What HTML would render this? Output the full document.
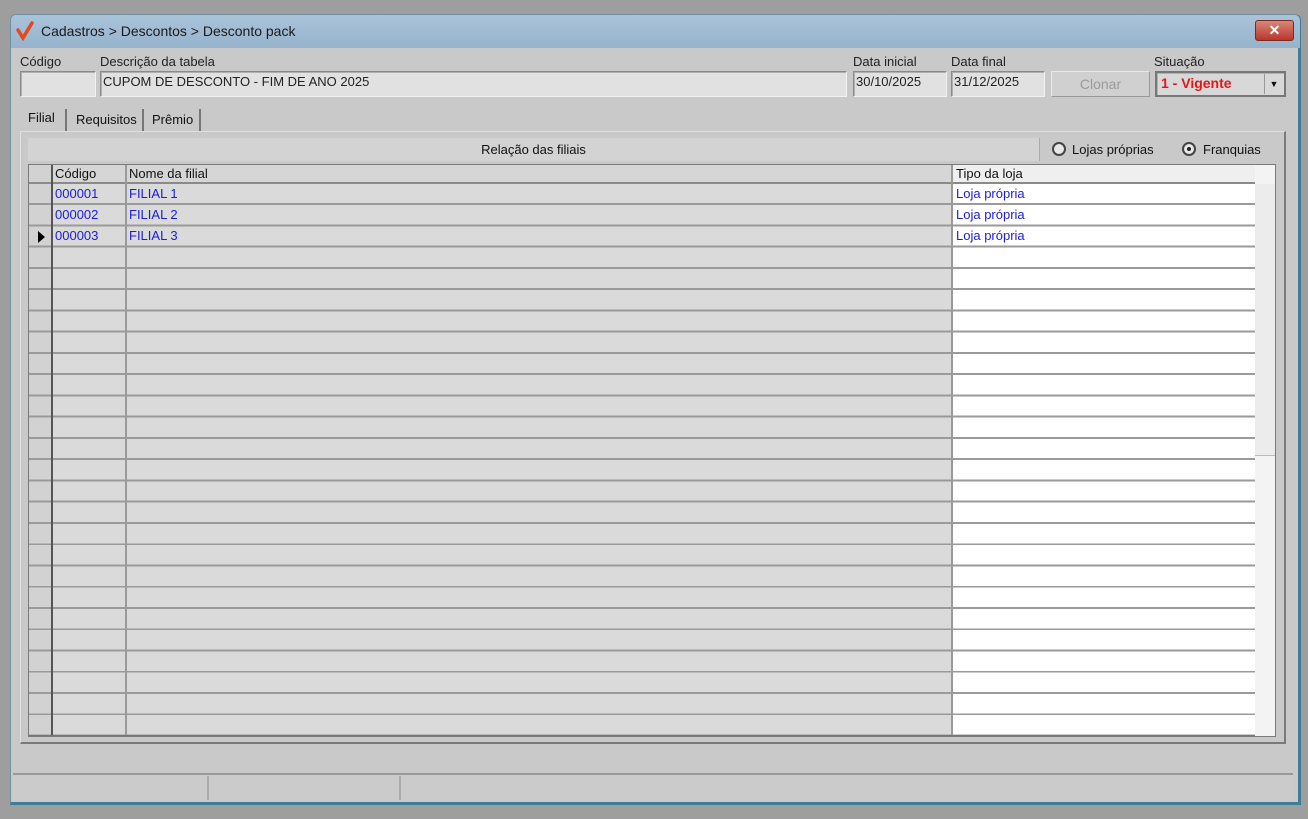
<!DOCTYPE html>
<html><head><meta charset="utf-8"><style>
*{margin:0;padding:0;box-sizing:border-box}
body{width:1308px;height:819px;background:#9e9e9e;font-family:"Liberation Sans",sans-serif;font-size:12px;color:#111;position:relative;overflow:hidden}
.a{position:absolute}
.win{left:10px;top:14px;width:1291px;height:791px;background:#c9c9c9;border:1px solid #6f8fa3;border-bottom:3px solid #3d7d95;border-right:3px solid #3d7d95;border-radius:6px 6px 0 0}
.title{left:11px;top:15px;width:1289px;height:33px;background:linear-gradient(#a9c3da,#97b3cc);border-radius:5px 5px 0 0}
.fld{background:#e1e1e1;border:1px solid #8a8a8a;border-right-color:#f2f2f2;border-bottom-color:#f2f2f2;box-shadow:inset 1px 1px 0 #b0b0b0;font-size:13px;padding:2px 2px;color:#222}
.lbl{font-size:13px;color:#222}
.grid{left:28px;top:164px;width:1248px;height:573px;border:1px solid #7a7a7a;background:#fff;overflow:hidden}
.rows{left:0;top:19px;width:1226px;height:553px;background:repeating-linear-gradient(to bottom,transparent 0,transparent 19.25px,#9a9a9a 19.25px,#9a9a9a 21.25px)}
.blue{color:#1c1cd8;font-size:13px}
</style></head><body>
<div class="a win"></div>
<div class="a title"></div>
<svg class="a" style="left:16px;top:21px" width="20" height="20" viewBox="0 0 20 20"><path d="M2 9 L7 17 L16 2" stroke="#e24a1c" stroke-width="3.5" fill="none" stroke-linecap="round"/></svg>
<div class="a" style="left:41px;top:23px;font-size:14px;color:#1a1a1a">Cadastros &gt; Descontos &gt; Desconto pack</div>
<div class="a" style="left:1255px;top:20px;width:39px;height:21px;background:linear-gradient(#d9877a,#b9372a);border:1px solid #7a2a20;border-radius:3px;color:#fff;font-weight:bold;text-align:center;font-size:14px;line-height:19px">✕</div>

<div class="a lbl" style="left:20px;top:54px">Código</div>
<div class="a fld" style="left:20px;top:71px;width:76px;height:26px"></div>
<div class="a lbl" style="left:100px;top:54px">Descrição da tabela</div>
<div class="a fld" style="left:100px;top:71px;width:747px;height:26px">CUPOM DE DESCONTO - FIM DE ANO 2025</div>
<div class="a lbl" style="left:853px;top:54px">Data inicial</div>
<div class="a fld" style="left:853px;top:71px;width:94px;height:26px">30/10/2025</div>
<div class="a lbl" style="left:951px;top:54px">Data final</div>
<div class="a fld" style="left:951px;top:71px;width:94px;height:26px">31/12/2025</div>
<div class="a" style="left:1051px;top:71px;width:99px;height:26px;background:#d0d0d0;border:1px solid #e8e8e8;border-right-color:#999;border-bottom-color:#999;color:#9a9a9a;font-size:14px;text-align:center;line-height:24px">Clonar</div>
<div class="a lbl" style="left:1154px;top:54px">Situação</div>
<div class="a fld" style="left:1155px;top:71px;width:131px;height:26px;border:2px solid #777;background:#d8d8d8;color:#e01818;font-weight:bold;font-size:14px;padding:2px 4px">1 - Vigente</div>
<div class="a" style="left:1264px;top:74px;width:19px;height:20px;background:#d8d8d8;border-left:1px solid #999;text-align:center;font-size:9px;line-height:20px">▼</div>

<div class="a" style="left:28px;top:110px;font-size:13px">Filial</div>
<div class="a" style="left:65px;top:109px;width:2px;height:22px;background:#777"></div>
<div class="a" style="left:76px;top:112px;font-size:13px">Requisitos</div>
<div class="a" style="left:142px;top:109px;width:2px;height:22px;background:#777"></div>
<div class="a" style="left:152px;top:112px;font-size:13px">Prêmio</div>
<div class="a" style="left:199px;top:109px;width:2px;height:22px;background:#777"></div>

<div class="a" style="left:20px;top:131px;width:1266px;height:613px;border:1px solid #e0e0e0;border-right:2px solid #7a7a7a;border-bottom:2px solid #7a7a7a"></div>
<div class="a" style="left:28px;top:138px;width:1012px;height:23px;background:#d3d3d3;border-right:1px solid #aaa;text-align:center;line-height:23px;font-size:13px">Relação das filiais</div>
<div class="a" style="left:1052px;top:142px;width:14px;height:14px;border:2px solid #444;border-radius:50%;background:#e8e8e8"></div>
<div class="a" style="left:1072px;top:142px;font-size:13px">Lojas próprias</div>
<div class="a" style="left:1182px;top:142px;width:14px;height:14px;border:2px solid #444;border-radius:50%;background:#e8e8e8"></div>
<div class="a" style="left:1187px;top:147px;width:4px;height:4px;border-radius:50%;background:#222"></div>
<div class="a" style="left:1203px;top:142px;font-size:13px">Franquias</div>

<div class="a grid">
 <div class="a" style="left:0;top:0;width:924px;height:573px;background:#dadada"></div>
 <div class="a" style="left:924px;top:0;width:302px;height:19px;background:#efefef"></div>
 <div class="a" style="left:0;top:0;width:924px;height:19px;background:#d6d6d6"></div>
 <div class="a" style="left:0;top:0;width:24px;height:573px;background:#d2d2d2"></div>
 <div class="a" style="left:0;top:17px;width:1226px;height:2px;background:#8a8a8a"></div>
 <div class="a rows"></div>
 <div class="a" style="left:22px;top:0;width:2px;height:573px;background:#555"></div>
 <div class="a" style="left:96px;top:0;width:2px;height:573px;background:#9a9a9a"></div>
 <div class="a" style="left:922px;top:0;width:2px;height:573px;background:#9a9a9a"></div>
 <div class="a" style="left:1226px;top:0;width:21px;height:573px;background:#f3f3f3"></div>
 <div class="a" style="left:1226px;top:19px;width:21px;height:272px;background:#ececec;border-bottom:1px solid #bbb"></div>
 <div class="a" style="left:0;top:570px;width:1226px;height:3px;background:#777"></div>
 <div class="a" style="left:26px;top:1px;font-size:13px">Código</div>
 <div class="a" style="left:100px;top:1px;font-size:13px">Nome da filial</div>
 <div class="a" style="left:927px;top:1px;font-size:13px">Tipo da loja</div>
 <div class="a blue" style="left:26px;top:21px">000001</div>
 <div class="a blue" style="left:100px;top:21px">FILIAL 1</div>
 <div class="a blue" style="left:927px;top:21px">Loja própria</div>
 <div class="a blue" style="left:26px;top:42px">000002</div>
 <div class="a blue" style="left:100px;top:42px">FILIAL 2</div>
 <div class="a blue" style="left:927px;top:42px">Loja própria</div>
 <div class="a blue" style="left:26px;top:63px">000003</div>
 <div class="a blue" style="left:100px;top:63px">FILIAL 3</div>
 <div class="a blue" style="left:927px;top:63px">Loja própria</div>
 <div class="a" style="left:9px;top:66px;width:0;height:0;border-left:7px solid #000;border-top:6px solid transparent;border-bottom:6px solid transparent"></div>
</div>

<div class="a" style="left:13px;top:773px;width:1280px;height:2px;background:#999"></div>
<div class="a" style="left:13px;top:775px;width:1280px;height:26px;background:#cbcbcb"></div>
<div class="a" style="left:207px;top:776px;width:2px;height:24px;background:#aaa"></div>
<div class="a" style="left:399px;top:776px;width:2px;height:24px;background:#aaa"></div>
</body></html>
